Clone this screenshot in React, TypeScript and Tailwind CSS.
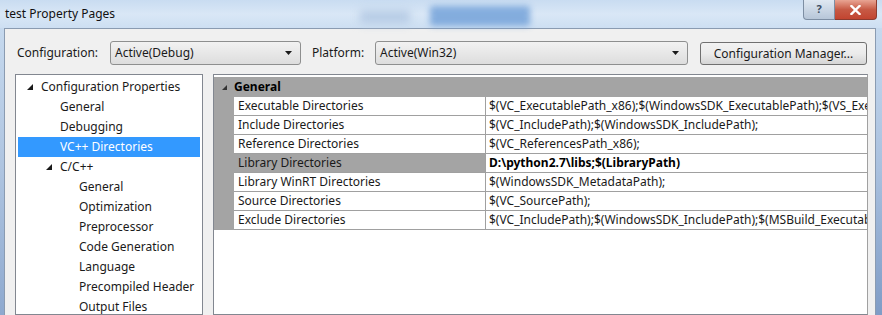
import React from "react";

const font = { fontFamily: '"Noto Sans", "Open Sans", sans-serif' };

function Tri({ className = "" }: { className?: string }) {
  return (
    <svg width="6" height="6" viewBox="0 0 6 6" className={className}>
      <polygon points="6,0 6,6 0,6" fill="#1a1a1a" />
    </svg>
  );
}

function Combo({ value, width }: { value: string; width: string }) {
  return (
    <div
      className={`${width} h-[24px] flex items-center justify-between rounded-[3px] border border-[#8e8f8f] bg-gradient-to-b from-[#f2f2f2] to-[#dddddd] pl-[4px] pr-[8px] text-[12px] text-[#1a1a1a]`}
    >
      <span>{value}</span>
      <svg width="7" height="4" viewBox="0 0 7 4">
        <polygon points="0,0 7,0 3.5,4" fill="#1a1a1a" />
      </svg>
    </div>
  );
}

const tree: { label: string; indent: number; tri?: boolean; sel?: boolean }[] = [
  { label: "Configuration Properties", indent: 0, tri: true },
  { label: "General", indent: 1 },
  { label: "Debugging", indent: 1 },
  { label: "VC++ Directories", indent: 1, sel: true },
  { label: "C/C++", indent: 1, tri: true },
  { label: "General", indent: 2 },
  { label: "Optimization", indent: 2 },
  { label: "Preprocessor", indent: 2 },
  { label: "Code Generation", indent: 2 },
  { label: "Language", indent: 2 },
  { label: "Precompiled Header", indent: 2 },
  { label: "Output Files", indent: 2 },
];

const rows: { name: string; value: string; sel?: boolean }[] = [
  { name: "Executable Directories", value: "$(VC_ExecutablePath_x86);$(WindowsSDK_ExecutablePath);$(VS_ExecutablePath);$(MSBuild_ExecutablePath)" },
  { name: "Include Directories", value: "$(VC_IncludePath);$(WindowsSDK_IncludePath);" },
  { name: "Reference Directories", value: "$(VC_ReferencesPath_x86);" },
  { name: "Library Directories", value: "D:\\python2.7\\libs;$(LibraryPath)", sel: true },
  { name: "Library WinRT Directories", value: "$(WindowsSDK_MetadataPath);" },
  { name: "Source Directories", value: "$(VC_SourcePath);" },
  { name: "Exclude Directories", value: "$(VC_IncludePath);$(WindowsSDK_IncludePath);$(MSBuild_ExecutablePath);$(VC_LibraryPath_x86);" },
];

export default function App() {
  return (
    <div style={font} className="w-[882px] h-[315px] overflow-hidden flex flex-col bg-[#c4d8ee] text-[#1a1a1a]">
      {/* Title bar */}
      <div className="relative h-[28px] shrink-0 bg-gradient-to-b from-[#c9dcf1] via-[#d9e7f6] to-[#cddff2] flex items-center">
        <div className="absolute left-[430px] top-[6px] w-[100px] h-[20px] rounded-[2px] bg-[#6f9fd8] blur-[3px] opacity-80" />
        <div className="absolute left-[360px] top-[10px] w-[50px] h-[14px] bg-[#b8cde6] blur-[4px]" />
        <span className="relative pl-[5px] text-[12px] text-[#111]">test Property Pages</span>
        <div className="absolute right-[5px] top-0 flex">
          <div className="w-[32px] h-[20px] rounded-bl-[4px] border border-[#7d8ea3] border-t-0 bg-gradient-to-b from-[#dfe8f2] to-[#b7c6d8] flex items-center justify-center text-[11px] text-[#3c4d63] font-bold">
            ?
          </div>
          <div className="w-[42px] h-[20px] rounded-br-[4px] border border-[#8c3b2f] border-t-0 border-l-0 bg-gradient-to-b from-[#e8a493] via-[#c75a45] to-[#c24430] flex items-center justify-center">
            <svg width="11" height="10" viewBox="0 0 11 10">
              <path d="M1.5 1 L9.5 9 M9.5 1 L1.5 9" stroke="#fff" strokeWidth="2.4" strokeLinecap="square" />
            </svg>
          </div>
        </div>
      </div>
      {/* Body */}
      <div className="flex flex-1 min-h-0">
        <div className="w-[4px] shrink-0 bg-gradient-to-b from-[#c6d9ee] via-[#aec4e0] to-[#8ea9cf]" />
        <div className="flex-1 min-w-0 border-t border-l border-r border-[#8a9bb1] bg-[#f0f0f0] flex flex-col pt-[12px] pl-[10px] pr-[7px]">
          {/* Top controls */}
          <div className="flex items-center h-[24px] text-[12px]">
            <span className="ml-[2px] w-[93px]">Configuration:</span>
            <Combo value="Active(Debug)" width="w-[191px]" />
            <span className="ml-[11px] w-[63px]">Platform:</span>
            <Combo value="Active(Win32)" width="w-[313px]" />
            <div className="ml-[12px] w-[167px] h-[23px] mt-[1px] rounded-[3px] border border-[#707070] bg-gradient-to-b from-[#f2f2f2] via-[#ebebeb] to-[#d5d5d5] flex items-center justify-center">
              Configuration Manager...
            </div>
          </div>
          {/* Panels */}
          <div className="flex flex-1 min-h-0 mt-[9px]">
            <div className="w-[188px] shrink-0 border border-[#828790] bg-white pt-[2px] px-[2px] text-[12px]">
              {tree.map((t, i) => (
                <div
                  key={i}
                  className={`h-[20px] flex items-center ${t.sel ? "bg-[#3399ff] text-white" : ""}`}
                >
                  <div
                    className={`${t.indent === 0 ? "w-[23px]" : t.indent === 1 ? "w-[42px]" : "w-[61px]"} shrink-0 flex justify-end pr-[8px]`}
                  >
                    {t.tri ? <Tri /> : null}
                  </div>
                  <span className="whitespace-nowrap">{t.label}</span>
                </div>
              ))}
            </div>
            <div className="ml-[10px] flex-1 min-w-0 border border-[#828790] border-r-[#a0a0a0] bg-white text-[12px] overflow-hidden pt-[2px]">
              <div className="h-[20px] bg-[#a4a4a4] flex items-center">
                <div className="w-[20px] flex justify-center">
                  <svg width="5" height="5" viewBox="0 0 5 5">
                    <polygon points="5,0 5,5 0,5" fill="#333" />
                  </svg>
                </div>
                <span className="font-bold text-black">General</span>
              </div>
              <div className="flex">
                <div className="w-[20px] shrink-0 bg-[#a4a4a4]" />
                <div className="flex-1 min-w-0">
                  {rows.map((r, i) => (
                    <div key={i} className="h-[19px] flex border-b border-[#a0a0a0]">
                      <div
                        className={`w-[252px] shrink-0 border-r border-[#a0a0a0] pl-[4px] flex items-center whitespace-nowrap ${r.sel ? "bg-[#a4a4a4]" : ""}`}
                      >
                        {r.name}
                      </div>
                      <div
                        className={`flex-1 min-w-0 pl-[3px] flex items-center whitespace-nowrap overflow-hidden ${r.sel ? "font-bold text-black" : ""}`}
                      >
                        {r.value}
                      </div>
                    </div>
                  ))}
                </div>
              </div>
            </div>
          </div>
        </div>
        <div className="w-[6px] shrink-0 bg-gradient-to-b from-[#c6d9ee] via-[#a9c0de] to-[#7f9cc6]" />
      </div>
    </div>
  );
}
